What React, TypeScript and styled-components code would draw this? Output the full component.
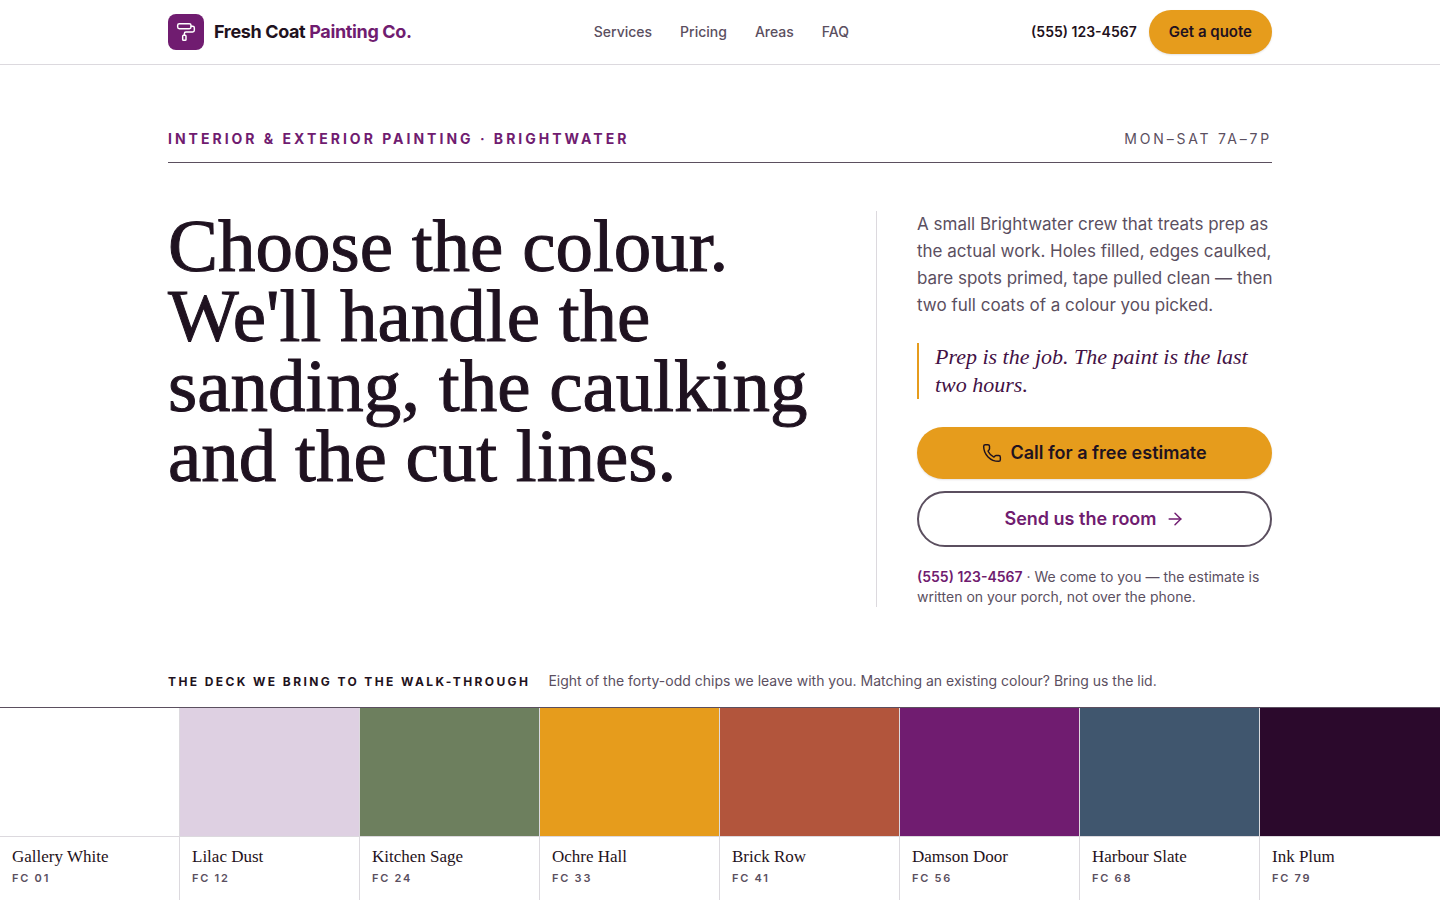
import React from "react";
import styled, { createGlobalStyle } from "styled-components";
import { ArrowRight, PaintRoller, Phone } from "lucide-react";

const sans = `Inter, "Liberation Sans", sans-serif`;
const serif = `"Liberation Serif", serif`;
const ink = "#1f1220";
const plum = "#701c70";
const muted = "#5b4f5f";
const hairline = "#dcd9de";
const ochre = "#e69c1c";

const GlobalStyle = createGlobalStyle`
  *, *::before, *::after { box-sizing: border-box; }
  body {
    margin: 0;
    background: #fff;
    color: ${ink};
    font-family: ${sans};
    line-height: 20px;
    -webkit-font-smoothing: antialiased;
  }
  h1, h2, p, ul, blockquote { margin: 0; padding: 0; }
  a { color: inherit; text-decoration: none; }
`;

const Container = styled.div`
  width: 100%;
  max-width: 1152px;
  margin: 0 auto;
  padding: 0 24px;
`;

const Header = styled.header`
  border-bottom: 1px solid ${hairline};
`;

const HeaderRow = styled(Container)`
  display: flex;
  align-items: center;
  justify-content: space-between;
  height: 64px;
`;

const Brand = styled.a`
  display: flex;
  align-items: center;
  gap: 10px;
  font-size: 18px;
  font-weight: 700;
  letter-spacing: -0.02em;
`;

const BrandMark = styled.span`
  display: grid;
  place-items: center;
  width: 36px;
  height: 36px;
  border-radius: 8px;
  background: ${plum};
  color: #fff;
`;

const BrandAccent = styled.span`
  color: ${plum};
`;

const Nav = styled.nav`
  display: flex;
  gap: 28px;
  font-size: 14px;
  font-weight: 500;
  color: ${muted};
`;

const HeaderActions = styled.div`
  display: flex;
  align-items: center;
  gap: 12px;
`;

const HeaderPhone = styled.a`
  font-size: 14px;
  font-weight: 600;
`;

const QuoteButton = styled.button`
  height: 44px;
  padding: 0 20px;
  border: 0;
  border-radius: 22px;
  background: ${ochre};
  color: ${ink};
  font: 600 15px/20px ${sans};
  box-shadow: 0 1px 2px rgba(31, 18, 32, 0.12);
`;

const Masthead = styled.div`
  display: flex;
  justify-content: space-between;
  align-items: baseline;
  margin-top: 64px;
  padding-bottom: 14px;
  border-bottom: 1px solid ${muted};
  line-height: 19px;
`;

const Eyebrow = styled.p`
  font-size: 14px;
  font-weight: 700;
  letter-spacing: 3px;
  text-transform: uppercase;
  color: ${plum};
`;

const Hours = styled.p`
  font-size: 14px;
  letter-spacing: 0.2em;
  text-transform: uppercase;
  color: ${muted};
`;

const Hero = styled.div`
  display: grid;
  grid-template-columns: 5fr 3fr;
  gap: 48px;
  margin-top: 48px;
`;

const Title = styled.h1`
  font: 400 75px/70px ${serif};
  -webkit-text-stroke: 1px currentColor;
`;

const Aside = styled.div`
  min-width: 0;
  padding-left: 40px;
  border-left: 1px solid ${hairline};
`;

const Lead = styled.p`
  font-size: 17px;
  line-height: 27px;
  white-space: nowrap;
  color: ${muted};
`;

const PullQuote = styled.blockquote`
  margin: 24px 0 28px;
  padding-left: 16px;
  border-left: 2px solid ${ochre};
  font: italic 400 22px/28px ${serif};
  color: #431145;
`;

const Actions = styled.div`
  display: flex;
  flex-direction: column;
  gap: 12px;
`;

const PrimaryButton = styled.button`
  display: flex;
  align-items: center;
  justify-content: center;
  gap: 8px;
  height: 52px;
  border: 0;
  border-radius: 28px;
  background: ${ochre};
  color: ${ink};
  font: 600 18px/20px ${sans};
  box-shadow: 0 1px 2px rgba(31, 18, 32, 0.12);
`;

const OutlineButton = styled(PrimaryButton)`
  height: 56px;
  border: 2px solid ${muted};
  background: transparent;
  color: ${plum};
  box-shadow: none;
`;

const Note = styled.p`
  margin-top: 20px;
  font-size: 14px;
  color: ${muted};
`;

const NotePhone = styled.a`
  font-weight: 600;
  color: ${plum};
`;

const DeckHead = styled(Container)`
  display: flex;
  align-items: baseline;
  gap: 18px;
  margin-top: 64px;
  padding-bottom: 15px;
`;

const DeckTitle = styled.h2`
  font-size: 12px;
  font-weight: 700;
  letter-spacing: 0.2em;
  text-transform: uppercase;
`;

const DeckText = styled.p`
  font-size: 14px;
  color: ${muted};
`;

const Deck = styled.ul`
  display: grid;
  grid-template-columns: repeat(8, 1fr);
  border-top: 1px solid ${muted};
  list-style: none;
`;

const Chip = styled.li`
  border-right: 1px solid ${hairline};
  &:last-child { border-right: 0; }
`;

const Swatch = styled.div<{ $color: string }>`
  height: 129px;
  border-bottom: 1px solid ${hairline};
  background: ${(p) => p.$color};
`;

const ChipLabel = styled.div`
  display: flex;
  flex-direction: column;
  gap: 3px;
  padding: 10px 12px 16px;
`;

const ChipName = styled.span`
  font: 400 17px/20px ${serif};
`;

const ChipCode = styled.span`
  font-size: 11px;
  font-weight: 600;
  line-height: 17px;
  letter-spacing: 0.16em;
  color: ${muted};
`;

const links = ["Services", "Pricing", "Areas", "FAQ"];

const chips = [
  { name: "Gallery White", code: "FC 01", color: "#ffffff" },
  { name: "Lilac Dust", code: "FC 12", color: "#ded0e2" },
  { name: "Kitchen Sage", code: "FC 24", color: "#6d7f5e" },
  { name: "Ochre Hall", code: "FC 33", color: "#e69c1c" },
  { name: "Brick Row", code: "FC 41", color: "#b2553c" },
  { name: "Damson Door", code: "FC 56", color: "#701c70" },
  { name: "Harbour Slate", code: "FC 68", color: "#40566e" },
  { name: "Ink Plum", code: "FC 79", color: "#2b092c" },
];

export default function App() {
  return (
    <>
      <GlobalStyle />
      <Header>
        <HeaderRow>
          <Brand href="#">
            <BrandMark>
              <PaintRoller size={20} strokeWidth={1.75} />
            </BrandMark>
            <span>
              Fresh Coat <BrandAccent>Painting Co.</BrandAccent>
            </span>
          </Brand>
          <Nav>
            {links.map((label) => (
              <a key={label} href={`#${label.toLowerCase()}`}>
                {label}
              </a>
            ))}
          </Nav>
          <HeaderActions>
            <HeaderPhone href="tel:5551234567">(555) 123-4567</HeaderPhone>
            <QuoteButton type="button">Get a quote</QuoteButton>
          </HeaderActions>
        </HeaderRow>
      </Header>
      <main>
        <Container>
          <Masthead>
            <Eyebrow>Interior &amp; exterior painting · Brightwater</Eyebrow>
            <Hours>Mon–Sat 7a–7p</Hours>
          </Masthead>
          <Hero>
            <Title>
              Choose the colour.
              <br />
              We'll handle the
              <br />
              sanding, the caulking
              <br />
              and the cut lines.
            </Title>
            <Aside>
              <Lead>
                A small Brightwater crew that treats prep as
                <br />
                the actual work. Holes filled, edges caulked,
                <br />
                bare spots primed, tape pulled clean — then
                <br />
                two full coats of a colour you picked.
              </Lead>
              <PullQuote>
                Prep is the job. The paint is the last
                <br />
                two hours.
              </PullQuote>
              <Actions>
                <PrimaryButton type="button">
                  <Phone size={20} strokeWidth={1.75} />
                  Call for a free estimate
                </PrimaryButton>
                <OutlineButton type="button">
                  Send us the room
                  <ArrowRight size={20} strokeWidth={1.75} />
                </OutlineButton>
              </Actions>
              <Note>
                <NotePhone href="tel:5551234567">(555) 123-4567</NotePhone> · We come to you — the
                estimate is written on your porch, not over the phone.
              </Note>
            </Aside>
          </Hero>
        </Container>
        <DeckHead>
          <DeckTitle>The deck we bring to the walk-through</DeckTitle>
          <DeckText>
            Eight of the forty-odd chips we leave with you. Matching an existing colour? Bring us
            the lid.
          </DeckText>
        </DeckHead>
        <Deck>
          {chips.map((chip) => (
            <Chip key={chip.code}>
              <Swatch $color={chip.color} />
              <ChipLabel>
                <ChipName>{chip.name}</ChipName>
                <ChipCode>{chip.code}</ChipCode>
              </ChipLabel>
            </Chip>
          ))}
        </Deck>
      </main>
    </>
  );
}
